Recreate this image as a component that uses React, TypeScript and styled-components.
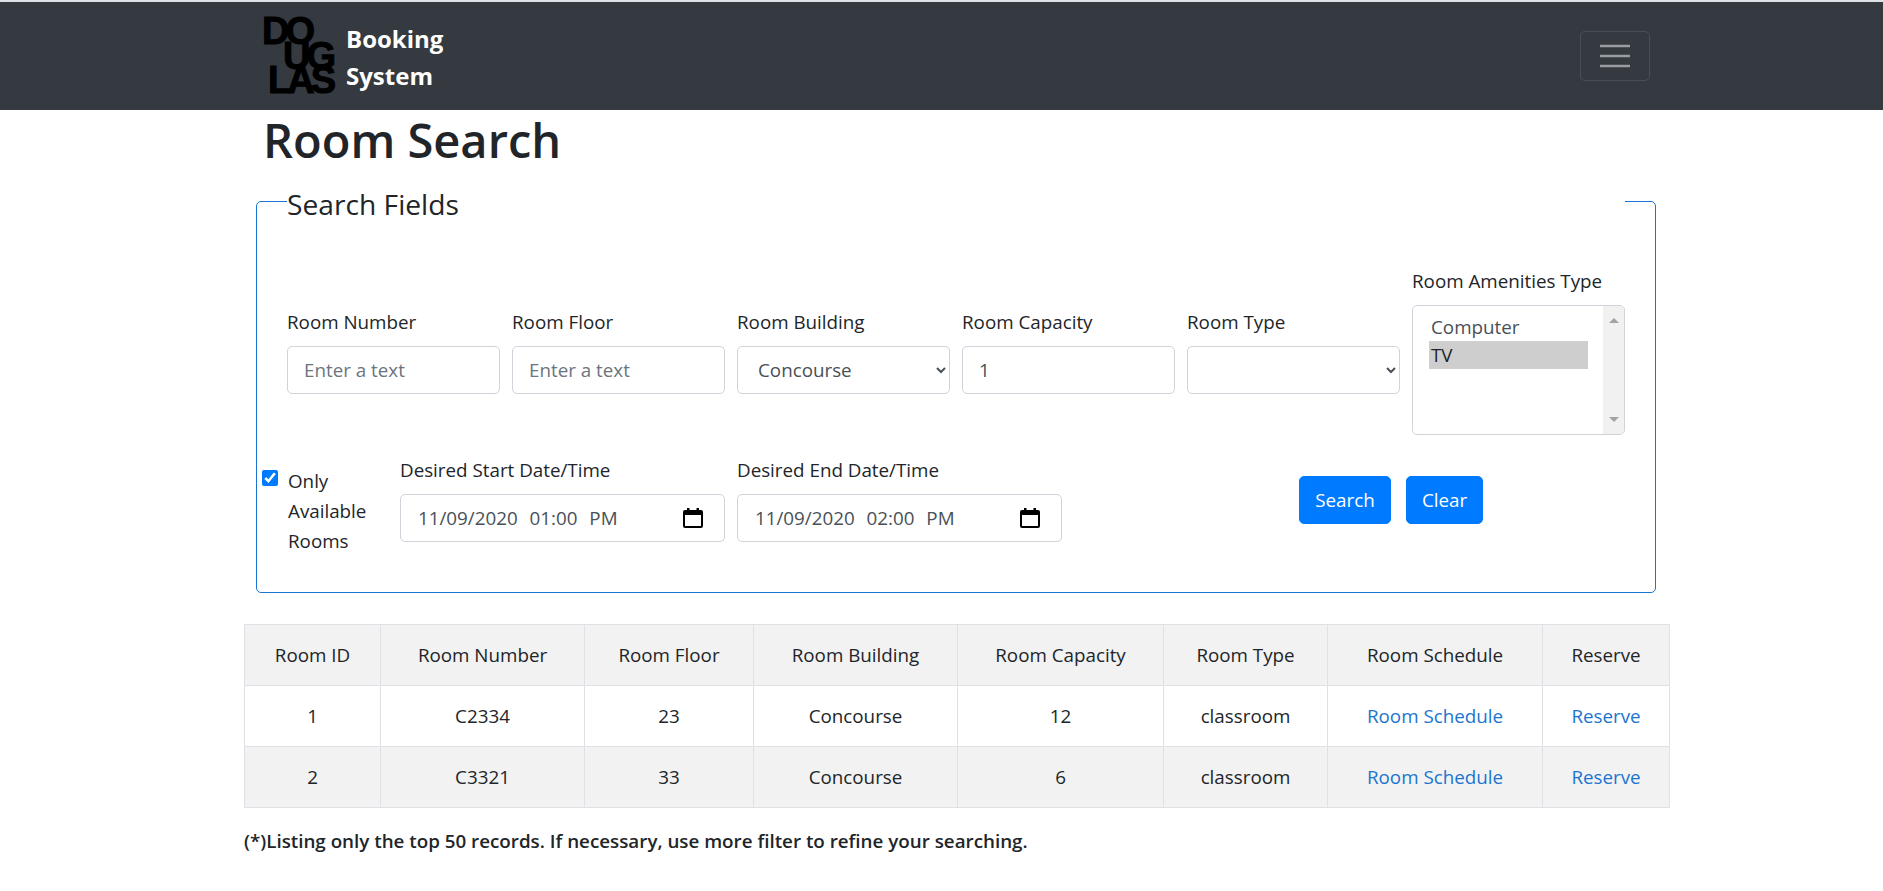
import styled, { createGlobalStyle } from 'styled-components';

const GlobalStyle = createGlobalStyle`
    body {
        margin: 0;
        background-color: #FFF;
        color: #212529;
        font-family: "Open Sans", "Noto Sans", sans-serif;
        font-size: 18.8px;
        line-height: 30px;
    }
`;

const NavBar = styled.nav`
    box-sizing: border-box;
    height: 110px;
    border-top: 2px solid #DEE2E6;
    background-color: #343A40;
    display: flex;
    align-items: center;
    justify-content: space-between;
    padding: 0 233px 0 262px;
`;

const Brand = styled.div`
    display: flex;
    align-items: center;
    gap: 12px;
`;

const Logo = styled.div`
    display: flex;
    flex-direction: column;
    width: 72px;
    color: #000;
    font-family: "Liberation Sans", sans-serif;
    font-weight: 700;
    font-size: 38px;
    line-height: 24.5px;
    letter-spacing: -4px;
    -webkit-text-stroke: 1px #000;
`;

const LogoLine = styled.span<{ $indent: number }>`
    display: block;
    padding-left: ${({ $indent }) => $indent}px;
`;

const BrandText = styled.div`
    padding-top: 2px;
    color: #FFF;
    font-weight: 700;
    font-size: 24px;
    line-height: 37.500px;
`;

const Toggler = styled.button`
    width: 70px;
    height: 50px;
    padding: 0;
    display: flex;
    align-items: center;
    justify-content: center;
    background-color: transparent;
    border: 1px solid rgba(255, 255, 255, 0.1);
    border-radius: 5px;

    svg {
        width: 30px;
        height: 30px;
    }
`;

const Page = styled.main`
    width: 1425px;
    margin-left: 244px;
`;

const Title = styled.h1`
    margin: 0 0 0 19px;
    font-size: 47px;
    line-height: 60px;
    font-weight: 600;
`;

const SearchBox = styled.fieldset`
    box-sizing: border-box;
    width: 1400px;
    height: 413px;
    margin: 10px 0 0 12px;
    padding: 0 30px;
    border: 1px solid #1B75D0;
    border-radius: 5px;
`;

const BoxLegend = styled.legend`
    width: 100%;
    padding: 6px 0 0;
    font-size: 28.2px;
    line-height: 36px;
`;

const FieldRow = styled.div`
    display: flex;
    align-items: center;
    gap: 12px;
    margin-top: 44px;
`;

const Field = styled.div<{ $width?: number }>`
    position: relative;
    width: ${({ $width }) => $width ?? 213}px;
    flex-shrink: 0;
`;

const FieldLabel = styled.label`
    display: block;
    margin-bottom: 9px;
`;

const controlStyles = `
    box-sizing: border-box;
    display: block;
    width: 100%;
    height: 48px;
    background-color: #FFF;
    border: 1px solid #CED4DA;
    border-radius: 5px;
    color: #495057;
    font-family: "Open Sans", "Noto Sans", sans-serif;
    font-size: 18.8px;
`;

const TextInput = styled.input`
    ${controlStyles}
    padding: 0 16px;

    &::placeholder {
        color: #6C757D;
    }
`;

const Select = styled.select`
    ${controlStyles}
    padding: 0 16px;
`;

const ListBox = styled.div`
    box-sizing: border-box;
    position: relative;
    height: 130px;
    padding: 7px 36px 0 16px;
    border: 1px solid #CED4DA;
    border-radius: 5px;
    color: #495057;
    line-height: 28px;
`;

const ListOption = styled.div<{ $selected?: boolean }>`
    padding-left: 2px;
    background-color: ${({ $selected }) => ($selected ? '#CECECE' : 'transparent')};
    color: ${({ $selected }) => ($selected ? '#212529' : '#495057')};
`;

const ScrollTrack = styled.div`
    position: absolute;
    top: 0;
    right: 0;
    bottom: 0;
    width: 21px;
    display: flex;
    flex-direction: column;
    justify-content: space-between;
    align-items: center;
    padding: 12px 0;
    box-sizing: border-box;
    background-color: #F1F1F1;
    border-radius: 0 4px 4px 0;
`;

const ScrollArrow = styled.span<{ $down?: boolean }>`
    width: 0;
    height: 0;
    border-left: 5px solid transparent;
    border-right: 5px solid transparent;
    border-${({ $down }) => ($down ? 'top' : 'bottom')}: 5px solid #A3A3A3;
`;

const DateRow = styled.div`
    display: flex;
    align-items: flex-start;
    margin: 20px 0 0 -25px;
`;

const AvailableCheck = styled.div`
    display: flex;
    align-items: flex-start;
    width: 138px;
    margin-top: 11px;
    flex-shrink: 0;
`;

const CheckBox = styled.input`
    width: 16px;
    height: 16px;
    margin: 4px 10px 0 0;
    accent-color: #007BFF;
`;

const CheckLabel = styled.label`
    width: 90px;
`;

const DateInput = styled.input`
    ${controlStyles}
    padding: 0 16px 0 17px;
    word-spacing: 7px;
`;

const CalendarIcon = styled.svg`
    position: absolute;
    right: 22px;
    bottom: 14px;
    width: 20px;
    height: 20px;
`;

const DateFields = styled.div`
    display: flex;
    gap: 12px;
`;

const ButtonRow = styled.div`
    display: flex;
    gap: 15px;
    margin: 21px 0 0 237px;
`;

const Button = styled.button<{ $width: number }>`
    width: ${({ $width }) => $width}px;
    height: 48px;
    padding: 0;
    background-color: #007BFF;
    border: 1px solid #007BFF;
    border-radius: 5px;
    color: #FFF;
    font-family: "Open Sans", "Noto Sans", sans-serif;
    font-size: 18.8px;
`;

const RoomTable = styled.table`
    width: 1425px;
    margin-top: 31px;
    border-collapse: collapse;
    table-layout: fixed;
    text-align: center;

    th, td {
        height: 60px;
        padding: 0;
        border: 1px solid #DEE2E6;
        font-weight: 400;
    }

    thead tr, tbody tr:nth-child(even) {
        background-color: #F2F2F2;
    }

    a {
        color: #1B75D0;
        text-decoration: none;
    }
`;

const Footnote = styled.p`
    margin: 18px 0 0;
    font-weight: 600;
`;

const columns = [136, 204, 169, 204, 206, 164, 215, 127];
const headers = ['Room ID', 'Room Number', 'Room Floor', 'Room Building', 'Room Capacity', 'Room Type', 'Room Schedule', 'Reserve'];
const rooms = [
    { id: 1, number: 'C2334', floor: 23, building: 'Concourse', capacity: 12, type: 'classroom' },
    { id: 2, number: 'C3321', floor: 33, building: 'Concourse', capacity: 6, type: 'classroom' },
];

const Calendar = () => (
    <CalendarIcon viewBox="0 0 20 20">
        <path d="M4 0h2.500v2h7V0H16v2h2a2 2 0 0 1 2 2v14a2 2 0 0 1-2 2H2a2 2 0 0 1-2-2V4a2 2 0 0 1 2-2h2zM2 7v11h16V7z" fill="#000" />
    </CalendarIcon>
);

const App = () => {
    return (
        <>
            <GlobalStyle />
            <NavBar>
                <Brand>
                    <Logo>
                        <LogoLine $indent={0}>DO</LogoLine>
                        <LogoLine $indent={21}>UG</LogoLine>
                        <LogoLine $indent={6}>LAS</LogoLine>
                    </Logo>
                    <BrandText>Booking<br />System</BrandText>
                </Brand>
                <Toggler>
                    <svg viewBox="0 0 30 30">
                        <path stroke="rgba(255,255,255,0.5)" strokeWidth="2.500" d="M0 5h30M0 15h30M0 25h30" />
                    </svg>
                </Toggler>
            </NavBar>
            <Page>
                <Title>Room Search</Title>
                <SearchBox>
                    <BoxLegend>Search Fields</BoxLegend>
                    <FieldRow>
                        <Field>
                            <FieldLabel>Room Number</FieldLabel>
                            <TextInput placeholder="Enter a text" />
                        </Field>
                        <Field>
                            <FieldLabel>Room Floor</FieldLabel>
                            <TextInput placeholder="Enter a text" />
                        </Field>
                        <Field>
                            <FieldLabel>Room Building</FieldLabel>
                            <Select defaultValue="Concourse">
                                <option>Concourse</option>
                            </Select>
                        </Field>
                        <Field>
                            <FieldLabel>Room Capacity</FieldLabel>
                            <TextInput defaultValue="1" />
                        </Field>
                        <Field>
                            <FieldLabel>Room Type</FieldLabel>
                            <Select defaultValue="">
                                <option value=""></option>
                            </Select>
                        </Field>
                        <Field>
                            <FieldLabel>Room Amenities Type</FieldLabel>
                            <ListBox>
                                <ListOption>Computer</ListOption>
                                <ListOption $selected>TV</ListOption>
                                <ScrollTrack>
                                    <ScrollArrow />
                                    <ScrollArrow $down />
                                </ScrollTrack>
                            </ListBox>
                        </Field>
                    </FieldRow>
                    <DateRow>
                        <AvailableCheck>
                            <CheckBox type="checkbox" defaultChecked />
                            <CheckLabel>Only Available Rooms</CheckLabel>
                        </AvailableCheck>
                        <DateFields>
                            <Field $width={325}>
                                <FieldLabel>Desired Start Date/Time</FieldLabel>
                                <DateInput defaultValue="11/09/2020 01:00 PM" />
                                <Calendar />
                            </Field>
                            <Field $width={325}>
                                <FieldLabel>Desired End Date/Time</FieldLabel>
                                <DateInput defaultValue="11/09/2020 02:00 PM" />
                                <Calendar />
                            </Field>
                        </DateFields>
                        <ButtonRow>
                            <Button $width={92}>Search</Button>
                            <Button $width={77}>Clear</Button>
                        </ButtonRow>
                    </DateRow>
                </SearchBox>
                <RoomTable>
                    <colgroup>
                        {columns.map((width, index) => <col key={index} width={width} />)}
                    </colgroup>
                    <thead>
                        <tr>
                            {headers.map((header) => <th key={header}>{header}</th>)}
                        </tr>
                    </thead>
                    <tbody>
                        {rooms.map((room) => (
                            <tr key={room.id}>
                                <td>{room.id}</td>
                                <td>{room.number}</td>
                                <td>{room.floor}</td>
                                <td>{room.building}</td>
                                <td>{room.capacity}</td>
                                <td>{room.type}</td>
                                <td><a href="#schedule">Room Schedule</a></td>
                                <td><a href="#reserve">Reserve</a></td>
                            </tr>
                        ))}
                    </tbody>
                </RoomTable>
                <Footnote>(*)Listing only the top 50 records. If necessary, use more filter to refine your searching.</Footnote>
            </Page>
        </>
    );
};

export default App;
